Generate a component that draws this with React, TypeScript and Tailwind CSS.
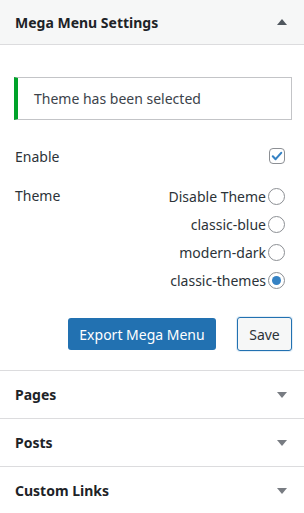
import React from "react";

const font = { fontFamily: '"Noto Sans", "Open Sans", sans-serif' };

function Caret({ up }: { up?: boolean }) {
  return (
    <svg width="10" height="6" viewBox="0 0 10 6" className="mr-[17px]">
      {up ? (
        <path d="M0 6 L5 0 L10 6 Z" fill="#50575e" />
      ) : (
        <path d="M0 0 L10 0 L5 6 Z" fill="#787c82" />
      )}
    </svg>
  );
}

function Radio({ label, checked }: { label: string; checked?: boolean }) {
  return (
    <label className="flex items-center justify-end h-[28px] gap-[2px] text-[14px] text-[#2c3338]">
      <span>{label}</span>
      <span className="w-[17px] h-[17px] rounded-full border border-[#8c8f94] bg-white flex items-center justify-center">
        {checked && <span className="w-[9px] h-[9px] rounded-full bg-[#3582c4]" />}
      </span>
    </label>
  );
}

function Section({ title }: { title: string }) {
  return (
    <div className="h-[48px] border-t border-[#dcdcde] flex items-center justify-between">
      <span className="pl-[15px] text-[14px] font-bold text-[#1d2327]">{title}</span>
      <Caret />
    </div>
  );
}

export default function App() {
  return (
    <div className="w-[304px] h-[513px] bg-white overflow-hidden" style={font}>
      {/* Header */}
      <div className="h-[45px] bg-[#f6f7f7] border-b border-[#dcdcde] flex items-center justify-between">
        <span className="pl-[15px] text-[14px] font-bold text-[#1d2327]">Mega Menu Settings</span>
        <Caret up />
      </div>

      <div className="pt-[32px] pb-[19px]">
        {/* Notice */}
        <div className="ml-[14px] mr-[12px] h-[43px] border border-[#c3c4c7] border-l-4 border-l-[#00a32a] flex items-center pl-[16px] text-[14px] text-[#3c434a]">
          Theme has been selected
        </div>

        {/* Enable */}
        <div className="mt-[22px] pl-[15px] pr-[19px] flex items-center justify-between h-[28px] text-[14px] text-[#2c3338]">
          <span>Enable</span>
          <span className="w-[16px] h-[16px] rounded-[4px] border border-[#8c8f94] bg-white flex items-center justify-center">
            <svg width="14" height="14" viewBox="0 0 20 20">
              <path d="M4 10.5 L8 14.5 L16 5.5" stroke="#3582c4" strokeWidth="3" fill="none" strokeLinecap="round" strokeLinejoin="round" />
            </svg>
          </span>
        </div>

        {/* Theme */}
        <div className="mt-[12px] pl-[15px] pr-[19px] flex justify-between">
          <span className="text-[14px] text-[#2c3338] leading-[28px]">Theme</span>
          <div className="flex flex-col">
            <Radio label="Disable Theme" />
            <Radio label="classic-blue" />
            <Radio label="modern-dark" />
            <Radio label="classic-themes" checked />
          </div>
        </div>

        {/* Buttons */}
        <div className="mt-[23px] pr-[12px] flex justify-end items-center gap-[21px]">
          <button className="h-[32px] w-[148px] rounded-[3px] bg-[#2271b1] text-white text-[14px]">
            Export Mega Menu
          </button>
          <button className="h-[34px] w-[55px] rounded-[3px] border border-[#2271b1] bg-[#f6f7f7] text-[#2c3338] text-[14px] shadow-[0_0_0_1px_#e3eef7]">
            Save
          </button>
        </div>
      </div>

      <Section title="Pages" />
      <Section title="Posts" />
      <Section title="Custom Links" />
    </div>
  );
}
